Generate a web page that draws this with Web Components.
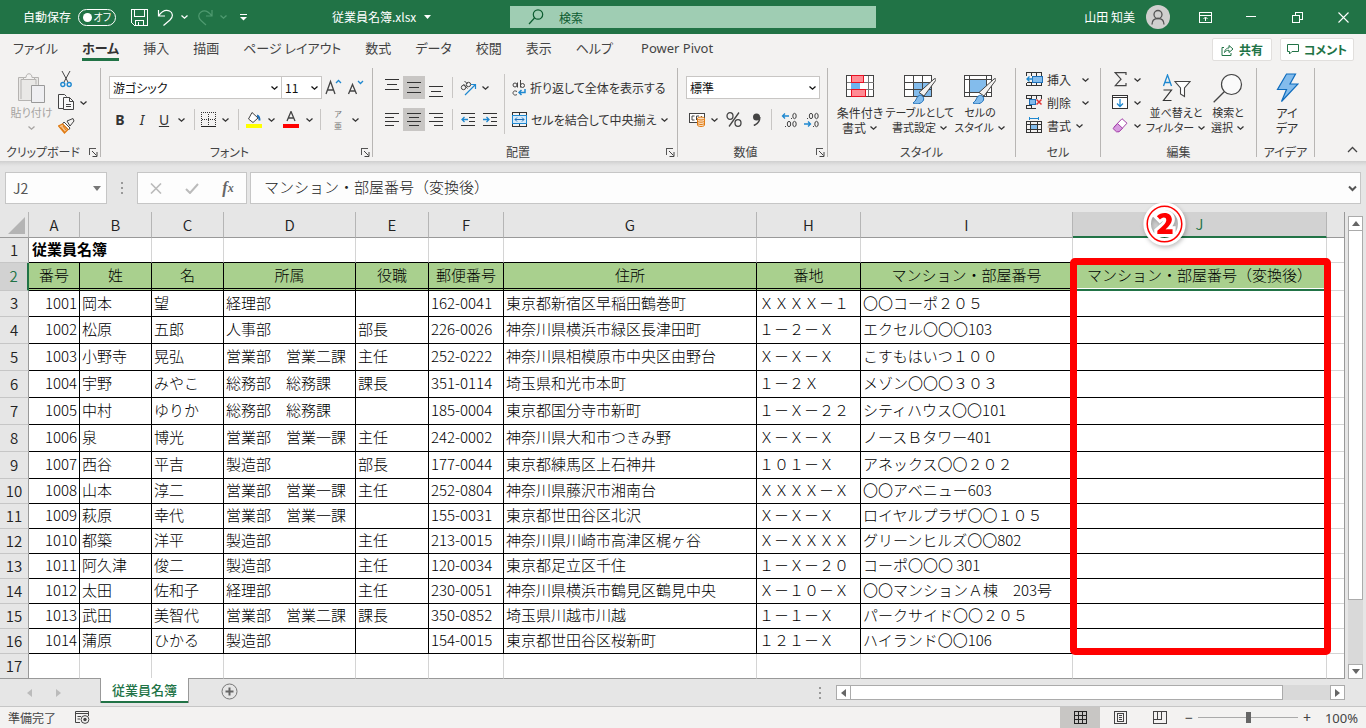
<!DOCTYPE html>
<html lang="ja">
<head>
<meta charset="utf-8">
<title>従業員名簿.xlsx</title>
<style>
  html, body { margin: 0; padding: 0; }
  body {
    font-family: "Noto Sans CJK JP", "Noto Sans", sans-serif;
    font-size: 12px;
    line-height: 16px;
    color: #333;
    background: #e6e6e6;
  }
</style>
</head>
<body>
<excel-app></excel-app>
<script>
/* ---------- icon set: [width, height, markup] ---------- */
const C = 'shape-rendering="crispEdges"';
const brush = '<path d="M34 5c1.500-1 2.500 0 1.600 1.500L24 22l-5-3.500z" transform="translate(-4 2)" fill="#f3f2f1" stroke="#444"/><path d="M9 31c3 1.800 9 1 10.500-3 .8-3-1.500-5-4-4.600-3.500.6-2.500 5.600-6.500 7.600z" fill="#83bcec" stroke="#1e6fb8"/>';
const ICONS = {
  caret: [9, 6, '<path d="M1.500 1.500l3 2.700 3-2.700" fill="none" stroke="currentColor" stroke-width="1.300"/>'],
  tri: [7, 4, '<path d="M0 0h7L3.500 4z" fill="currentColor"/>'],
  save: [17, 17, `<g fill="none" stroke="#fff" ${C}><path d="M.5.500h16v16h-13l-3-3z"/><path d="M3.500 1v6h10V1M4.500 16v-5h8v5M7.500 16v-3"/></g>`],
  undo: [17, 17, '<path d="M1.500 1v6h6.500M1.500 7C5 2 9 .5 12.500 2s4 6 .5 9l-6.500 5.500" fill="none" stroke="#fff" stroke-width="1.200"/>'],
  redo: [17, 17, '<path d="M14 1v6H8M14 7C10 2 6 1 3 3s-3 6 0 8.500l5 4.500" fill="none" stroke="#4f9a70" stroke-width="1.200"/>'],
  custom: [9, 7, '<path d="M1 .5h7" stroke="#fff" shape-rendering="crispEdges"/><path d="M1 3h7L4.500 6.500z" fill="#fff"/>'],
  search: [16, 16, '<g fill="none" stroke="#0c5c30" stroke-width="1.200"><circle cx="10" cy="5.500" r="4.700"/><path d="M6.500 9L1 15"/></g>'],
  user: [24, 24, '<circle cx="12" cy="12" r="12" fill="#d0cfce"/><g fill="none" stroke="#555" stroke-width="1.300"><circle cx="12" cy="9.500" r="4"/><path d="M6 19.500c0-4 2.500-6 6-6s6 2 6 6"/></g>'],
  ribbonopt: [13, 11, `<g fill="none" stroke="#fff" ${C}><path d="M.5.500h12v10H.5zM1 3.500h11"/></g><path d="M6.500 9V5.500M4.500 7l2-2 2 2" fill="none" stroke="#fff"/>`],
  min: [10, 10, `<path d="M0 4.500h10" stroke="#fff" ${C}/>`],
  restore: [11, 11, `<path d="M.5 3.500h7v7h-7zM3.500 3V.500h7v7H8" fill="none" stroke="#fff" ${C}/>`],
  close: [11, 11, '<path d="M.5.500l10 10M10.500.500l-10 10" stroke="#fff" stroke-width="1.100"/>'],
  share: [13, 12, '<g fill="none" stroke="#217346"><path d="M3 3.500H1v8h9V9"/><path d="M3.500 8.500C4 5 6 4 8 4V1.500L12 5 8 8.500V6.300c-2 0-3.500.5-4.500 2.200z"/></g>'],
  comment: [12, 11, '<path d="M.5.500h11v7H5L2.500 10V7.500h-2z" fill="none" stroke="#217346"/>'],
  paste: [28, 31, '<g fill="none" stroke="#b5b3b1"><path d="M13 27.500H.5v-23h20V12M3 6.500h15v5M3 6.500V26" fill="#e9e8e6"/><path d="M5.500 6.500V4.500H8c0-5 6-5 6 0h2.500v2z" fill="#f3f2f1"/><path d="M13.500 12.500h13v17h-13z" fill="#efeff2" stroke="#999"/></g>'],
  cut: [12, 17, '<path d="M2 0l6.500 12M10 0L3.500 12" stroke="#444" fill="none"/><g fill="none" stroke="#1e88d0" stroke-width="1.400"><circle cx="2.800" cy="13.500" r="2"/><circle cx="9.200" cy="13.500" r="2"/></g>'],
  copy: [17, 17, '<g fill="#f8f8f8" stroke="#444"><path d="M5 14.500H.5V.500h6l2 2"/><path d="M5.500 3.500h6l4 4v8h-10z"/><path d="M11.500 3.500v4h4M8 10.500h5M8 12.500h5" fill="none"/></g>'],
  painter: [17, 16, '<path d="M9 3l6-2.500L16 3l-4 5z" fill="#f3f2f1" stroke="#444"/><path d="M6 4l6 6-1.500 2L4.500 6z" fill="#fff" stroke="#444"/><path d="M4.500 6L.5 8l6 7 3.500-3.500z" fill="#f6c08a" stroke="#e07b12" stroke-width="1.200"/><path d="M2.500 9l4 5M5 8l3 4" stroke="#e07b12"/>'],
  growA: [17, 18, '<path d="M1 15L5.500 2.500 10 15M2.500 11h6" fill="none" stroke="#444" stroke-width="1.300"/><path d="M11 4l2.500-2.500L16 4" fill="none" stroke="#1e88d0" stroke-width="1.300"/>'],
  shrinkA: [17, 18, '<path d="M1.500 15L5.500 5.500 9.500 15M3 12h5" fill="none" stroke="#444" stroke-width="1.300"/><path d="M11 2l2.500 2.500L16 2" fill="none" stroke="#1e88d0" stroke-width="1.300"/>'],
  borders: [16, 16, `<g ${C} fill="none" stroke="#333" stroke-dasharray="1 1"><path d="M0 .5h15M.5 0v14M14.500 0v14M7.500 2v12M1 7.500h13"/></g><path d="M0 14.500h15" stroke="#222" ${C}/>`],
  fill: [16, 17, '<path d="M6 1.500L12 7l-5 4.500L2.500 8z" fill="#fff" stroke="#444"/><path d="M11 4.500c2 .5 2.500 2 2.500 5" fill="none" stroke="#1e6fb8" stroke-width="2"/><path d="M0 13h16v4H0z" fill="#ff0"/>'],
  fontcolor: [16, 17, '<path d="M4 10L8 .5 12 10M5.300 7h5.400" fill="none" stroke="#444" stroke-width="1.300"/><path d="M0 13h16v4H0z" fill="#f00"/>'],
  alTop: [14, 18, `<path d="M0 .5h14M2 5.500h10M0 10.500h14" stroke="#333" ${C}/>`],
  alMid: [14, 18, `<path d="M0 3.500h14M2 8.500h10M0 13.500h14" stroke="#333" ${C}/>`],
  alBot: [14, 18, `<path d="M0 7.500h14M2 12.500h10M0 17.500h14" stroke="#333" ${C}/>`],
  alL: [14, 14, `<path d="M0 .5h14M0 4.500h9M0 8.500h14M0 12.500h9" stroke="#333" ${C}/>`],
  alC: [14, 14, `<path d="M0 .5h14M2 4.500h10M0 8.500h14M2 12.500h10" stroke="#333" ${C}/>`],
  alR: [14, 14, `<path d="M0 .5h14M5 4.500h9M0 8.500h14M5 12.500h9" stroke="#333" ${C}/>`],
  orient: [17, 16, '<g fill="none" stroke="#444"><circle cx="3.500" cy="7.500" r="2.200"/><path d="M3.500 4l4 4.500"/><circle cx="8.500" cy="4.500" r="2.200"/><path d="M4.500 1l3 3"/></g><path d="M5 15L15 5M11 4.500h4.500V9" fill="none" stroke="#1e88d0" stroke-width="1.200"/>'],
  outd: [15, 14, `<path d="M0 .5h14M8 4.500h6M8 8.500h6M0 12.500h14" stroke="#333" ${C}/><path d="M7 6.500H1M3.500 4L1 6.500 3.500 9" fill="none" stroke="#1e88d0" stroke-width="1.300"/>`],
  ind: [15, 14, `<path d="M0 .5h14M8 4.500h6M8 8.500h6M0 12.500h14" stroke="#333" ${C}/><path d="M0 6.500h6M3.500 4L6 6.500 3.500 9" fill="none" stroke="#1e88d0" stroke-width="1.300"/>`],
  wrap: [14, 16, '<g fill="none" stroke="#444"><circle cx="3" cy="5" r="2"/><path d="M5.500 2.500V7.500M8.500 0v7.500M5 11.500c-3-1.500-4 .3-4 1.500s1.500 3 4 1.500"/><circle cx="10.500" cy="5.500" r="2"/></g><path d="M13 9v3.500H7M9.500 10L7 12.500 9.500 15" fill="none" stroke="#1e88d0" stroke-width="1.500"/>'],
  merge: [15, 15, `<g fill="none" ${C}><path d="M.5.500h14v14H.500zM7.500 0v3M7.500 12v3" stroke="#333"/><path d="M.5 3.500h14v8H.500z" fill="#d6eafa" stroke="#1e88d0"/></g><path d="M3 7.500h9M5 5.500l-2 2 2 2M10 5.500l2 2-2 2" fill="none" stroke="#1e6fb8"/>`],
  currency: [17, 15, `<path d="M.5 1.500h15v9H.5z" fill="#fff" stroke="#444" ${C}/><path d="M5.500 4H3v4h2.500M10 4H7.500v4M12.500 4v3" stroke="#444" fill="none"/><g fill="#fbe0c4" stroke="#e07b12"><path d="M8.500 6.500v6.500c0 2 7 2 7 0V6.500"/><ellipse cx="12" cy="6.500" rx="3.500" ry="1.500"/><path d="M8.500 8.700c0 2 7 2 7 0M8.500 11c0 2 7 2 7 0" fill="none"/></g>`],
  percent: [16, 15, '<g fill="none" stroke="#444" stroke-width="1.300"><ellipse cx="4" cy="4" rx="3" ry="3.300"/><ellipse cx="12" cy="11" rx="3" ry="3.300"/><path d="M13 .5L3 14.500"/></g>'],
  comma: [9, 13, '<circle cx="4.500" cy="4" r="3.500" fill="#444"/><path d="M7.800 4c0 4-2 7-6 8.500" fill="none" stroke="#444" stroke-width="1.600"/>'],
  decUp: [17, 16, '<path d="M8 4H1.500M4 1.500L1.500 4 4 6.500" fill="none" stroke="#1e88d0" stroke-width="1.300"/><g fill="none" stroke="#444"><ellipse cx="13.500" cy="4" rx="1.700" ry="2.700"/><ellipse cx="8" cy="12" rx="1.700" ry="2.700"/><ellipse cx="13.500" cy="12" rx="1.700" ry="2.700"/><path d="M10 6.500h1M4 14.500h1"/></g>'],
  decDn: [17, 16, '<path d="M1 12h6.500M5 9.500L7.500 12 5 14.500" fill="none" stroke="#1e88d0" stroke-width="1.300"/><g fill="none" stroke="#444"><ellipse cx="8" cy="4" rx="1.700" ry="2.700"/><ellipse cx="13.500" cy="4" rx="1.700" ry="2.700"/><ellipse cx="13.500" cy="12" rx="1.700" ry="2.700"/><path d="M4 6.500h1M10 14.500h1"/></g>'],
  condfmt: [29, 28, `<g ${C}><path d="M.5 1.500h27v21H.5z" fill="#fff" stroke="#444"/><path d="M5.500 2v20M22.500 2v20M1 8.500h27M1 15.500h27" stroke="#777"/><path d="M5.500 1.500h12v7h-12zM5.500 15.500h14v7h-14z" fill="#ff8c94" stroke="#e81123"/><path d="M5 9h9v6H5z" fill="#6cb4f0"/></g>`],
  tablefmt: [32, 32, `<g ${C}><path d="M.5 3.500h27v21H.5z" fill="#fff"/><path d="M9 10h19v15H9z" fill="#83bcec"/><path d="M.5 3.500h27v21H.5zM9.500 4v20M18.500 4v20M1 10.500h27M1 17.500h27" fill="none" stroke="#444"/></g>${brush}`],
  cellstyle: [32, 32, `<g ${C}><path d="M.5 3.500h27v21H.5z" fill="#fff"/><path d="M6 8h17v12H6z" fill="#83bcec"/><path d="M.5 3.500h27v21H.5zM5.500 4v20M22.500 4v20M1 7.500h27M1 20.500h27" fill="none" stroke="#444"/></g>${brush}`],
  insert: [17, 15, `<g ${C} fill="none"><path d="M.5 3.500V.500h15v13H.5V11M5.500 0v4M10.500 0v4M10.500 10v4M5.500 10v4M1 10.500h4" stroke="#333"/><path d="M6 4h10v6H6z" fill="#83bcec" stroke="#1e6fb8"/></g><path d="M7 7H1M3.500 4.500L1 7l2.500 2.500" fill="none" stroke="#1e88d0" stroke-width="1.300"/>`],
  del: [17, 15, `<g ${C} fill="none"><path d="M.5 3.500V.500h15v3M.5 10v3.500h9M.5 3.500h4M5.500 0v4M10.500 0v4M5.500 10v4M.5 10.500h4" stroke="#333"/><path d="M3.500 4.500h6v5h-6z" fill="#83bcec" stroke="#1e6fb8"/></g><path d="M10.500 4.500l5 5M15.500 4.500l-5 5" stroke="#e03535" stroke-width="1.500"/>`],
  format: [17, 17, `<g ${C} fill="none"><path d="M.5 4.500h15v11H.5zM4.500 4v12M11.500 4v12M1 7.500h15M1 12.500h15" stroke="#333"/><path d="M5 8h6v4H5z" fill="#83bcec"/><path d="M3.500 0v3M12.500 0v3M4 1.500h9" stroke="#1e88d0"/></g>`],
  sum: [13, 15, '<path d="M12 3V.700H1.200L7 7.200l-5.800 6.500H12V11" fill="none" stroke="#444" stroke-width="1.200"/>'],
  filldown: [17, 15, `<path d="M.5.500h15v13H.5zM1 2.500h14" fill="#fff" stroke="#333" ${C}/><path d="M8 4v7.500M5 8.500l3 3 3-3" fill="none" stroke="#1e88d0" stroke-width="1.300"/>`],
  eraser: [16, 15, '<path d="M10 .7l5 4.500L7 13.800 2 9z" fill="#fff" stroke="#a33fa8"/><path d="M5.500 5.500l5 4.700L7 13.800H4.500L1 10.500z" fill="#d79be0" stroke="#a33fa8"/>'],
  sort: [29, 28, '<path d="M1.500 12L5.500 1l4 11M3 8.500h5" fill="none" stroke="#1e88d0" stroke-width="1.300"/><path d="M1.500 16h8l-8 10.500h8" fill="none" stroke="#333" stroke-width="1.200"/><path d="M13 7.500h15L22.500 14v8.500l-4-2.500v-6z" fill="#fff" stroke="#444" stroke-width="1.100"/>'],
  find: [30, 30, '<circle cx="18.500" cy="11.500" r="10" fill="#fafafa" stroke="#444" stroke-width="1.200"/><path d="M11.500 18.500L.7 29.300" stroke="#444" stroke-width="1.300"/>'],
  bolt: [23, 30, '<path d="M10.500 1h9l-5.500 10h8L5.500 28.500l5-12H1.500z" fill="#83bcec" stroke="#0f6cbd" stroke-width="1.200"/>'],
  launch: [9, 9, '<path d="M.5 7V.500H7" fill="none" stroke="#555" shape-rendering="crispEdges"/><path d="M3 3l4.500 4.500M8 4v4.500H3.500" fill="none" stroke="#444"/>'],
  up: [11, 7, '<path d="M1 6l4.500-4.500L10 6" fill="none" stroke="#444" stroke-width="1.300"/>'],
  dots: [2, 14, `<path d="M0 1.500h2M0 6.500h2M0 11.500h2" stroke="#999" stroke-width="2" ${C}/>`],
  cancel: [12, 11, '<path d="M1 .5l10 10M11 .5l-10 10" stroke="#bbb" stroke-width="1.600"/>'],
  check: [14, 11, '<path d="M1 6l4 4 8-9" fill="none" stroke="#bbb" stroke-width="2"/>'],
  thick: [9, 7, '<path d="M1 1.500l3.500 3.500L8 1.500" fill="none" stroke="#555" stroke-width="2"/>'],
  corner: [17, 17, '<path d="M17 0v17H0z" fill="#b4b4b4"/>'],
  prev: [5, 8, '<path d="M5 0v8L0 4z" fill="currentColor"/>'],
  next: [5, 8, '<path d="M0 0v8l5-4z" fill="currentColor"/>'],
  triup: [8, 5, '<path d="M0 5h8L4 0z" fill="currentColor"/>'],
  tridn: [8, 5, '<path d="M0 0h8L4 5z" fill="currentColor"/>'],
  plus: [17, 17, '<circle cx="8.500" cy="8.500" r="7.500" fill="none" stroke="#777"/><path d="M4.500 8.500h8M8.500 4.500v8" stroke="#666" stroke-width="2"/>'],
  macro: [15, 13, '<path d="M13.500 5V.500H.5v11H5M1 2.500h13" fill="none" stroke="#444"/><path d="M2.500 5.500H6M2.500 8H5" stroke="#444"/><circle cx="10" cy="8.500" r="3.900" fill="#f3f2f1" stroke="#444"/><circle cx="10" cy="8.500" r="1.700" fill="#444"/>'],
  vNormal: [13, 13, `<path d="M.5.500h12v12H.5zM4.500 0v13M8.500 0v13M0 4.500h13M0 8.500h13" fill="none" stroke="#222" ${C}/>`],
  vPage: [13, 13, `<path d="M.5.500h12v12H.5zM3.500 2.500h6v8h-6zM5 4.500h3M5 6.500h3M5 8.500h3" fill="none" stroke="#444" ${C}/>`],
  vBreak: [14, 13, `<path d="M.5.500h13v12H.5zM4.500 0v8M8.500 0v8M1 8.500h8" fill="none" stroke="#444" ${C}/>`]
};

/* ---------- base class: clones a template into an open shadow root ---------- */
class Part extends HTMLElement {
  constructor() { super(); this.attachShadow({ mode: 'open' }); }
  connectedCallback() {
    const t = document.createElement('template');
    t.innerHTML = `<style>*{box-sizing:border-box}
      button,input,select{font:inherit;font-feature-settings:inherit;color:inherit;margin:0;padding:0;border:0;background:none;border-radius:0;outline-offset:-2px}
      ${this.css()}</style>${this.html()}`;
    this.shadowRoot.replaceChildren(t.content.cloneNode(true));
  }
  css() { return ''; }
  html() { return ''; }
  at(name) { return this.getAttribute(name) || ''; }
}

customElements.define('x-icon', class extends Part {
  css() { return ':host{display:block;flex:none}svg{display:block}'; }
  html() {
    const [w, h, m] = ICONS[this.at('name')];
    return `<svg width="${w}" height="${h}" viewBox="0 0 ${w} ${h}" aria-hidden="true">${m}</svg>`;
  }
});

/* small button: icon and/or slotted text */
customElements.define('tool-button', class extends Part {
  css() {
    return `:host{display:block;flex:none;width:22px;height:23px}
      :host([w="8"]){width:8px}:host([w="12"]){width:12px}:host([w="16"]){width:16px}:host([w="28"]){width:28px}
      :host([w="auto"]){width:auto}
      :host([on]){background:#c8c6c4}
      button{width:100%;height:100%;display:flex;align-items:center;justify-content:center;gap:4px;white-space:nowrap}`;
  }
  html() {
    const i = this.at('icon');
    return `<button type="button"${this.at('label') ? ` aria-label="${this.at('label')}"` : ''}>${i ? `<x-icon name="${i}"></x-icon>` : ''}<slot></slot></button>`;
  }
});

/* tall ribbon button: icon over two lines of text */
customElements.define('big-button', class extends Part {
  css() {
    return `:host{display:block;flex:none;width:60px}
      :host([narrow]){width:44px}
      :host([small]){font-size:11px}
      :host([dim]){color:#a6a4a2}
      button{width:100%;display:flex;flex-direction:column;align-items:center;line-height:15px;white-space:nowrap}
      .i{height:37px;padding-top:3px;display:flex;align-items:center}
      .l{display:flex;align-items:center;gap:3px;height:15px}`;
  }
  html() {
    const c = this.hasAttribute('caret') ? '<x-icon name="caret"></x-icon>' : '';
    return `<button type="button"><span class="i"><x-icon name="${this.at('icon')}"></x-icon></span><span class="l"><slot></slot></span><span class="l"><slot name="second"></slot>${c}</span></button>`;
  }
});

customElements.define('drop-box', class extends Part {
  css() {
    return `:host{display:grid;height:23px;background:#fff;border:1px solid #c8c6c4;align-items:center;color:#111}
      select{grid-area:1/1;width:100%;height:100%;appearance:none;padding-left:3px}
      x-icon{grid-area:1/1;justify-self:end;margin-right:2px;pointer-events:none}`;
  }
  html() {
    return `<select aria-label="${this.at('label')}"><option>${this.at('value')}</option></select><x-icon name="caret"></x-icon>`;
  }
});

customElements.define('title-bar', class extends Part {
  css() {
    return `:host{display:flex;height:34px;background:#217346;color:#fff;align-items:center;font-feature-settings:"palt"}
      .left{flex:none;width:510px;display:flex;align-items:center;padding-left:23px}
      label.auto{display:flex;align-items:center;gap:7px;width:105px}
      .sw{position:relative;width:38px;height:17px;border:1px solid #fff;border-radius:9px;display:flex;align-items:center;justify-content:flex-end;padding-right:4px;font-size:10px;line-height:14px}
      .sw input{position:absolute;inset:0;width:100%;height:100%;opacity:0}
      .sw::before{content:"";position:absolute;left:4px;top:3px;width:9px;height:9px;border-radius:50%;background:#fff}
      button{display:flex;align-items:center;justify-content:center;height:26px}
      .q{width:22px}.d{width:30px}
      .redo{width:26px;margin-left:4px}
      .dimmed{color:#4f9a70}
      .doc{margin-left:74px;gap:8px}
      .search{flex:0 1 366px;height:22px;background:#9fcdb3;color:#0c5c30;display:flex;align-items:center;padding-left:18px;gap:15px}
      .search input{flex:1;min-width:0;height:100%}
      .search input::placeholder{color:#0c5c30;opacity:1}
      .right{margin-left:auto;display:flex;align-items:center}
      .user{gap:11px;margin-right:12px}
      .win{width:46px}`;
  }
  html() {
    return `<div class="left">
        <label class="auto">自動保存<span class="sw"><input type="checkbox" role="switch">オフ</span></label>
        <button class="q" aria-label="上書き保存" type="button"><x-icon name="save"></x-icon></button>
        <button class="d" aria-label="元に戻す" type="button"><x-icon name="undo"></x-icon></button>
        <button aria-label="元に戻す履歴" type="button"><x-icon name="caret"></x-icon></button>
        <button class="redo" aria-label="やり直し" type="button"><x-icon name="redo"></x-icon></button>
        <button class="dimmed" aria-label="やり直し履歴" type="button"><x-icon name="caret"></x-icon></button>
        <button class="d" aria-label="クイック アクセス ツール バーのカスタマイズ" type="button"><x-icon name="custom"></x-icon></button>
        <button class="doc" type="button">従業員名簿.xlsx<x-icon name="tri"></x-icon></button>
      </div>
      <div class="search"><x-icon name="search"></x-icon><input type="search" placeholder="検索" aria-label="検索"></div>
      <div class="right">
        <button class="user" type="button">山田 知美<x-icon name="user"></x-icon></button>
        <button class="win" aria-label="リボンの表示オプション" type="button"><x-icon name="ribbonopt"></x-icon></button>
        <button class="win" aria-label="最小化" type="button"><x-icon name="min"></x-icon></button>
        <button class="win" aria-label="元に戻す(縮小)" type="button"><x-icon name="restore"></x-icon></button>
        <button class="win" aria-label="閉じる" type="button"><x-icon name="close"></x-icon></button>
      </div>`;
  }
});

customElements.define('ribbon-tabs', class extends Part {
  css() {
    return `:host{display:flex;height:32px;background:#f3f2f1;padding:0 12px 0 13px;font-size:13px;font-feature-settings:"palt";color:#444}
      nav{display:flex;gap:24px}
      nav button{height:27px;padding-top:3px;white-space:nowrap;border-bottom:3px solid transparent}
      nav button.on{font-weight:700;border-color:#217346;color:#333}
      nav button.en{font-family:"Noto Sans",sans-serif;margin-left:4px}
      .r{margin-left:auto;display:flex;gap:8px;padding-top:4px}
      .r button{height:23px;display:flex;align-items:center;justify-content:center;gap:5px;background:#fff;border:1px solid #e1dfdd;border-radius:2px;color:#217346;font-weight:700;width:60px;white-space:nowrap;font-size:12px}
      .r button.w{width:74px}`;
  }
  html() {
    const tabs = ['ファイル', 'ホーム', '挿入', '描画', 'ページ レイアウト', '数式', 'データ', '校閲', '表示', 'ヘルプ', 'Power Pivot'];
    return `<nav>${tabs.map((t, i) => `<button type="button" class="${i === 1 ? 'on' : i === 10 ? 'en' : ''}">${t}</button>`).join('')}</nav>
      <div class="r"><button type="button"><x-icon name="share"></x-icon>共有</button><button class="w" type="button"><x-icon name="comment"></x-icon>コメント</button></div>`;
  }
});

customElements.define('ribbon-group', class extends Part {
  css() {
    return `:host{display:flex;flex-direction:column;flex:none;margin:2px 0 4px;height:89px;border-right:1px solid #b8b6b4}
      .body{flex:1;display:flex;align-items:flex-start}
      .foot{display:flex;align-items:center;height:10px;line-height:10px;color:#444}
      .foot span{flex:1;text-align:center;white-space:nowrap}
      .foot button{width:14px;display:flex;justify-content:center}`;
  }
  html() {
    const l = this.at('launch');
    return `<div class="body"><slot></slot></div><div class="foot"><span>${this.at('name')}</span>${l ? `<button type="button" aria-label="${l}"><x-icon name="launch"></x-icon></button>` : ''}</div>`;
  }
});

customElements.define('ribbon-bar', class extends Part {
  css() {
    return `:host{display:flex;background:#f3f2f1;font-feature-settings:"palt";color:#333}
      .two{display:flex;flex-direction:column;gap:9px;padding:8px 0 0 8px}
      .three{display:flex;flex-direction:column}
      .row{display:flex;align-items:center}
      .s{flex:none;width:10px;height:21px;background:linear-gradient(#c8c6c4,#c8c6c4) center/1px 100% no-repeat}
      .s.x{width:14px}
      .tall{flex:none;width:1px;height:60px;margin:6px 7px 0 3px;background:#c8c6c4}
      b,i,u{font-family:"Noto Sans",sans-serif;font-size:14px}
      .g1{width:101px}.g2{width:272px}.g3{width:305px}.g4{width:150px}.g5{width:188px}.g6{width:85px}.g7{width:156px}.g8{width:58px}
      .f1{width:173px}.f2{width:41px;margin-left:-1px}.f3{width:134px}
      .cells{padding-left:10px}
      .ed{padding:0 0 0 8px}
      .ruby{font-size:8px;line-height:12px;color:#777;display:flex;flex-direction:column}
      .end{margin-left:auto;align-self:flex-end;padding-right:3px}`;
  }
  html() {
    const cr = (l, w = 12) => `<tool-button w="${w}" icon="caret" label="${l}"></tool-button>`;
    return `
    <ribbon-group class="g1" name="クリップボード" launch="クリップボードの設定">
      <big-button dim small icon="paste" style="padding-left:3px">貼り付け<x-icon slot="second" name="caret"></x-icon></big-button>
      <div class="three" style="margin-left:-5px">
        <tool-button icon="cut" label="切り取り"></tool-button>
        <div class="row"><tool-button icon="copy" label="コピー"></tool-button>${cr('コピーのオプション')}</div>
        <tool-button icon="painter" label="書式のコピー/貼り付け"></tool-button>
      </div>
    </ribbon-group>
    <ribbon-group class="g2" name="フォント" launch="フォントの設定">
      <div class="two">
        <div class="row"><drop-box class="f1" label="フォント" value="游ゴシック"></drop-box><drop-box class="f2" label="フォント サイズ" value="11"></drop-box>
          <tool-button icon="growA" label="フォント サイズの拡大"></tool-button><tool-button icon="shrinkA" label="フォント サイズの縮小"></tool-button></div>
        <div class="row"><tool-button><b>B</b></tool-button><tool-button><i>I</i></tool-button><tool-button><u>U</u></tool-button>${cr('下線')}<span class="s x"></span>
          <tool-button w="16" icon="borders" label="下罫線"></tool-button>${cr('罫線', 16)}<span class="s"></span>
          <tool-button icon="fill" label="塗りつぶしの色"></tool-button>${cr('塗りつぶしの色の選択')}<tool-button w="28" icon="fontcolor" label="フォントの色"></tool-button>${cr('フォントの色の選択', 8)}<span class="s x"></span>
          <tool-button><span class="ruby"><span>ア</span><span>亜</span></span></tool-button>${cr('ふりがな')}</div>
      </div>
    </ribbon-group>
    <ribbon-group class="g3" name="配置" launch="配置の設定">
      <div class="two">
        <div class="row"><tool-button icon="alTop" label="上揃え"></tool-button><tool-button on icon="alMid" label="上下中央揃え"></tool-button><tool-button icon="alBot" label="下揃え"></tool-button><span class="s"></span><tool-button icon="orient" label="方向"></tool-button>${cr('方向の選択')}</div>
        <div class="row"><tool-button icon="alL" label="左揃え"></tool-button><tool-button on icon="alC" label="中央揃え"></tool-button><tool-button icon="alR" label="右揃え"></tool-button><span class="s"></span><tool-button icon="outd" label="インデントを減らす"></tool-button><tool-button icon="ind" label="インデントを増やす"></tool-button></div>
      </div>
      <span class="tall"></span>
      <div class="two" style="padding-left:0">
        <div class="row"><tool-button w="auto" icon="wrap">折り返して全体を表示する</tool-button></div>
        <div class="row"><tool-button w="auto" icon="merge">セルを結合して中央揃え</tool-button>${cr('結合のオプション', 16)}</div>
      </div>
    </ribbon-group>
    <ribbon-group class="g4" name="数値" launch="表示形式の設定">
      <div class="two">
        <drop-box class="f3" label="数値の書式" value="標準"></drop-box>
        <div class="row"><tool-button icon="currency" label="通貨表示形式"></tool-button>${cr('通貨の選択')}<tool-button w="28" icon="percent" label="パーセント スタイル"></tool-button><tool-button w="16" icon="comma" label="桁区切りスタイル"></tool-button><span class="s x"></span><tool-button icon="decUp" label="小数点以下の表示桁数を増やす"></tool-button><tool-button icon="decDn" label="小数点以下の表示桁数を減らす"></tool-button></div>
      </div>
    </ribbon-group>
    <ribbon-group class="g5" name="スタイル">
      <big-button icon="condfmt" caret style="margin-left:2px">条件付き<span slot="second">書式</span></big-button>
      <big-button small icon="tablefmt" caret>テーブルとして<span slot="second">書式設定</span></big-button>
      <big-button small icon="cellstyle" caret>セルの<span slot="second">スタイル</span></big-button>
    </ribbon-group>
    <ribbon-group class="g6" name="セル">
      <div class="three cells">
        <div class="row"><tool-button w="auto" icon="insert">挿入</tool-button>${cr('挿入のオプション', 28)}</div>
        <div class="row"><tool-button w="auto" icon="del">削除</tool-button>${cr('削除のオプション', 28)}</div>
        <div class="row"><tool-button w="auto" icon="format">書式</tool-button>${cr('書式のオプション', 16)}</div>
      </div>
    </ribbon-group>
    <ribbon-group class="g7" name="編集">
      <div class="three ed">
        <div class="row"><tool-button icon="sum" label="合計"></tool-button>${cr('合計のオプション')}</div>
        <div class="row"><tool-button icon="filldown" label="フィル"></tool-button>${cr('フィルのオプション')}</div>
        <div class="row"><tool-button icon="eraser" label="クリア"></tool-button>${cr('クリアのオプション')}</div>
      </div>
      <big-button small icon="sort" caret style="margin-left:3px">並べ替えと<span slot="second">フィルター</span></big-button>
      <big-button small narrow icon="find" caret>検索と<span slot="second">選択</span></big-button>
    </ribbon-group>
    <ribbon-group class="g8" name="アイデア">
      <big-button icon="bolt">アイ<span slot="second">デア</span></big-button>
    </ribbon-group>
    <div class="end"><tool-button icon="up" label="リボンを折りたたむ"></tool-button></div>`;
  }
});

customElements.define('formula-bar', class extends Part {
  css() {
    return `:host{display:flex;height:51px;padding:11px 5px 8px;background:linear-gradient(#cfcfcf,#e2e2e2 4px,#e6e6e6 6px);color:#444}
      .b{background:#fdfdfd;border:1px solid #c6c6c6;display:flex;align-items:center;height:32px}
      .name{width:102px;font-size:14px;padding:0 5px 0 7px;color:#555}
      .name input,.f input{flex:1;min-width:0;height:100%}
      .d{width:30px;display:flex;align-items:center;justify-content:center}
      .btns{width:110px;justify-content:space-between;padding:0 8px}
      .btns button{display:flex;width:20px;height:100%;align-items:center;justify-content:center}
      .fx{font-family:"Liberation Serif",serif;font-style:italic;font-weight:700;font-size:16px;color:#666}
      .fx small{font-size:12px}
      .f{flex:1;margin-left:3px;padding:0 3px 0 13px;font-size:15px;font-weight:300;color:#222}
      .f input{padding-bottom:4px}`;
  }
  html() {
    return `<div class="b name"><input aria-label="名前ボックス" value="J2"><x-icon name="tridn" style="color:#777"></x-icon></div>
      <div class="d"><x-icon name="dots"></x-icon></div>
      <div class="b btns"><button type="button" aria-label="キャンセル"><x-icon name="cancel"></x-icon></button><button type="button" aria-label="入力"><x-icon name="check"></x-icon></button><button type="button" class="fx" aria-label="関数の挿入">f<small>x</small></button></div>
      <div class="b f"><input aria-label="数式バー" value="マンション・部屋番号（変換後）"><x-icon name="thick"></x-icon></div>`;
  }
});

const COLS = [['A', 51], ['B', 72], ['C', 72], ['D', 132], ['E', 73], ['F', 75], ['G', 253], ['H', 104], ['I', 212], ['J', 254]];
const HEAD = ['番号', '姓', '名', '所属', '役職', '郵便番号', '住所', '番地', 'マンション・部屋番号', 'マンション・部屋番号（変換後）'];
const ROWS = [
  ['1001', '岡本', '望', '経理部', '', '162-0041', '東京都新宿区早稲田鶴巻町', 'ＸＸＸＸ－１', '〇〇コーポ２０５'],
  ['1002', '松原', '五郎', '人事部', '部長', '226-0026', '神奈川県横浜市緑区長津田町', '１－２－Ｘ', 'エクセル〇〇〇103'],
  ['1003', '小野寺', '晃弘', '営業部　営業二課', '主任', '252-0222', '神奈川県相模原市中央区由野台', 'Ｘ－Ｘ－Ｘ', 'こすもはいつ１００'],
  ['1004', '宇野', 'みやこ', '総務部　総務課', '課長', '351-0114', '埼玉県和光市本町', '１－２Ｘ', 'メゾン〇〇〇３０３'],
  ['1005', '中村', 'ゆりか', '総務部　総務課', '', '185-0004', '東京都国分寺市新町', '１－Ｘ－２２', 'シティハウス〇〇101'],
  ['1006', '泉', '博光', '営業部　営業一課', '主任', '242-0002', '神奈川県大和市つきみ野', 'Ｘ－Ｘ－Ｘ', 'ノースＢタワー401'],
  ['1007', '西谷', '平吉', '製造部', '部長', '177-0044', '東京都練馬区上石神井', '１０１－Ｘ', 'アネックス〇〇２０２'],
  ['1008', '山本', '淳二', '営業部　営業一課', '主任', '252-0804', '神奈川県藤沢市湘南台', 'ＸＸＸＸ－Ｘ', '〇〇アベニュー603'],
  ['1009', '萩原', '幸代', '営業部　営業一課', '', '155-0031', '東京都世田谷区北沢', 'Ｘ－Ｘ－Ｘ', 'ロイヤルプラザ〇〇１０５'],
  ['1010', '都築', '洋平', '製造部', '主任', '213-0015', '神奈川県川崎市高津区梶ヶ谷', 'Ｘ－ＸＸＸＸ', 'グリーンヒルズ〇〇802'],
  ['1011', '阿久津', '俊二', '製造部', '主任', '120-0034', '東京都足立区千住', '１－Ｘ－２０', 'コーポ〇〇〇 301'],
  ['1012', '太田', '佐和子', '経理部', '主任', '230-0051', '神奈川県横浜市鶴見区鶴見中央', 'Ｘ－１０－Ｘ', '〇〇マンションＡ棟　203号'],
  ['1013', '武田', '美智代', '営業部　営業二課', '課長', '350-0852', '埼玉県川越市川越', '１－１－Ｘ', 'パークサイド〇〇２０５'],
  ['1014', '蒲原', 'ひかる', '製造部', '', '154-0015', '東京都世田谷区桜新町', '１２１－Ｘ', 'ハイランド〇〇106']
];

customElements.define('sheet-grid', class extends Part {
  css() {
    return `:host{display:block;flex:1;min-width:0;font-size:15px;color:#000}
      table{border-collapse:separate;border-spacing:0;table-layout:fixed;width:100%;background:#fff;line-height:20px;border-right:1px solid #999}
      th,td{padding:0 2px 2px;font-weight:300;white-space:nowrap;border:0 solid #d4d4d4;border-width:0 1px 1px 0;text-align:left;overflow:visible}
      td:last-child,thead th:last-child{border-right:0}
      thead tr{height:26px}
      thead th{background:#e6e6e6;border-color:#999;border-right-color:#b5b5b5;text-align:center;font-weight:350;color:#222;padding-bottom:0}
      thead th.sel{background:#d2d2d2;border-bottom:2px solid #217346;color:#217346;position:relative}
      thead th.all{padding:1px 2px 0 8px}
      tbody th{background:#e6e6e6;border-color:#c6c6c6;border-right-color:#999;text-align:center;font-weight:350;color:#222;padding:0 0 1px}
      tbody th.sel{background:#d2d2d2;border-right:2px solid #217346;color:#217346}
      tr.r25{height:25px}tr.r26{height:26px}tr.r27{height:27px}tr.r28{height:28px}
      .data td,.head td{border-color:#000}
      .title td{border-bottom-color:#000}
      .data td:last-child,.head td:last-child,.title td:last-child{border-color:#d4d4d4}
      .title td:nth-child(2){font-weight:700;border-right:0;padding-left:3px}
      .head td{background:#a9d08e;text-align:center;border-bottom:3px double #000}
      .head td.cur{position:relative;border-bottom:2px solid #217346;box-shadow:inset 0 -1px #fff}
      .head td:last-child{background:#fff;border-bottom:1px solid #d4d4d4}
      .data td:nth-child(2){text-align:right}
      tr.last > *{border-bottom-color:#999}
      .frame{position:absolute;left:-3px;right:-5px;top:-5px;height:397px;border:7px solid #f00;border-radius:5px;pointer-events:none}
      .badge{position:absolute;left:50%;top:50%;margin:-22px 0 0 -57px;z-index:1;width:44px;height:40px;line-height:40px;text-align:center;font-size:38px;font-weight:900;color:#f00;-webkit-text-stroke:6px #fff;paint-order:stroke fill;filter:drop-shadow(1px 2px 2px rgba(0,0,0,.25))}`;
  }
  html() {
    const cols = `<col style="width:29px">${COLS.map(c => `<col style="width:${c[1]}px">`).join('')}<col>`;
    const head = `<tr><th class="all"><x-icon name="corner"></x-icon></th>${COLS.map(c => c[0] === 'J' ? `<th class="sel" scope="col">J<span class="badge">②</span></th>` : `<th scope="col">${c[0]}</th>`).join('')}<th></th></tr>`;
    const blank = n => '<td></td>'.repeat(n);
    const body = ROWS.map((r, i) => `<tr class="data ${i === 0 ? 'r26' : i < 7 ? 'r27' : 'r25'}"><th scope="row">${i + 3}</th>${r.map(v => `<td>${v}</td>`).join('')}${blank(2)}</tr>`).join('');
    return `<table><colgroup>${cols}</colgroup><thead>${head}</thead><tbody>
      <tr class="title r25"><th scope="row">1</th><td>従業員名簿</td>${blank(10)}</tr>
      <tr class="head r28"><th class="sel" scope="row">2</th>${HEAD.map((h, i) => i === 9 ? `<td class="cur">${h}<span class="frame"></span></td>` : `<td>${h}</td>`).join('')}<td></td></tr>
      ${body}<tr class="r25 last"><th scope="row">17</th>${blank(11)}</tr></tbody></table>`;
  }
});

/* scroll bar: arrow button, thumb, track, arrow button */
customElements.define('scroll-strip', class extends Part {
  css() {
    return `:host{display:flex;background:#d9d9d9;color:#666}
      :host([dir="v"]){flex-direction:column;width:15px}
      :host([dir="h"]){height:15px}
      button,.thumb{background:#fff;border:1px solid #ababab;flex:none}
      button{width:15px;height:15px;display:flex;align-items:center;justify-content:center}
      :host([dir="h"]) .thumb{flex-basis:85%;margin-left:-1px}
      :host([dir="h"]) button:last-child{margin-left:auto}
      :host([dir="v"]) .thumb{flex-basis:80%;margin-top:-1px}
      :host([dir="v"]) button:last-child{margin-top:auto}`;
  }
  html() {
    const v = this.at('dir') === 'v';
    return `<button type="button" aria-label="${v ? '上' : '左'}へスクロール"><x-icon name="${v ? 'triup' : 'prev'}"></x-icon></button><div class="thumb"></div><button type="button" aria-label="${v ? '下' : '右'}へスクロール"><x-icon name="${v ? 'tridn' : 'next'}"></x-icon></button>`;
  }
});

customElements.define('sheet-tabs', class extends Part {
  css() {
    return `:host{display:flex;height:27px;background:#e6e6e6;padding-right:21px;align-items:flex-start;color:#bbb}
      .nav{width:100px;display:flex;align-items:center;padding-left:27px;gap:24px;height:27px}
      .nav button{display:flex;width:5px;height:16px;align-items:center}
      .tab{flex:none;width:89px;height:25px;margin-top:-1px;background:#fff;color:#217346;font-weight:500;font-size:13px;border:solid #999;border-width:0 1px 0;box-shadow:inset 0 -2px #217346;padding-bottom:1px}
      .add{margin:4px 0 0 32px;display:flex}
      .dots{margin-left:auto;padding:7px 15px 0 0}
      scroll-strip{flex:0 1 509px;margin-top:6px}`;
  }
  html() {
    return `<div class="nav"><button type="button" aria-label="前のシート"><x-icon name="prev"></x-icon></button><button type="button" aria-label="次のシート"><x-icon name="next"></x-icon></button></div>
      <button type="button" class="tab">従業員名簿</button>
      <button type="button" class="add" aria-label="新しいシート"><x-icon name="plus"></x-icon></button>
      <div class="dots"><x-icon name="dots"></x-icon></div>
      <scroll-strip dir="h"></scroll-strip>`;
  }
});

customElements.define('status-bar', class extends Part {
  css() {
    return `:host{display:flex;height:22px;background:#f3f2f1;border-top:1px solid #c6c6c6;align-items:center;padding:0 8px;color:#444}
      .mac{margin-left:19px;display:flex}
      .r{margin-left:auto;display:flex;align-items:center;height:100%}
      .v{width:40px;height:100%;display:flex;align-items:center;justify-content:center}
      .v.on{background:#c8c6c4}
      .z{width:18px;font-family:"Noto Sans",sans-serif;font-size:14px}
      input{appearance:none;width:100px;height:16px;background:linear-gradient(#aaa,#aaa) center/100% 1px no-repeat}
      input::-webkit-slider-thumb{appearance:none;width:5px;height:11px;background:#666}
      .p{width:42px;text-align:right;font-family:"Noto Sans",sans-serif;font-size:13px}`;
  }
  html() {
    return `<span>準備完了</span><button type="button" class="mac" aria-label="マクロの記録"><x-icon name="macro"></x-icon></button>
      <div class="r"><button type="button" class="v on" aria-label="標準"><x-icon name="vNormal"></x-icon></button><button type="button" class="v" aria-label="ページ レイアウト"><x-icon name="vPage"></x-icon></button><button type="button" class="v" aria-label="改ページ プレビュー"><x-icon name="vBreak"></x-icon></button>
      <button type="button" class="z">−</button><input type="range" min="0" max="100" value="50" aria-label="ズーム"><button type="button" class="z">+</button><button type="button" class="p">100%</button></div>`;
  }
});

customElements.define('excel-app', class extends Part {
  css() {
    return `:host{display:flex;flex-direction:column;min-height:100vh}
      .sheet{display:flex;flex:1 0 auto;background:#e6e6e6}
      .sheet scroll-strip{flex:none;margin:4px 3px 0}`;
  }
  html() {
    return `<title-bar></title-bar><ribbon-tabs></ribbon-tabs><ribbon-bar></ribbon-bar><formula-bar></formula-bar>
      <div class="sheet"><sheet-grid></sheet-grid><scroll-strip dir="v"></scroll-strip></div>
      <sheet-tabs></sheet-tabs><status-bar></status-bar>`;
  }
});
</script>
</body>
</html>
